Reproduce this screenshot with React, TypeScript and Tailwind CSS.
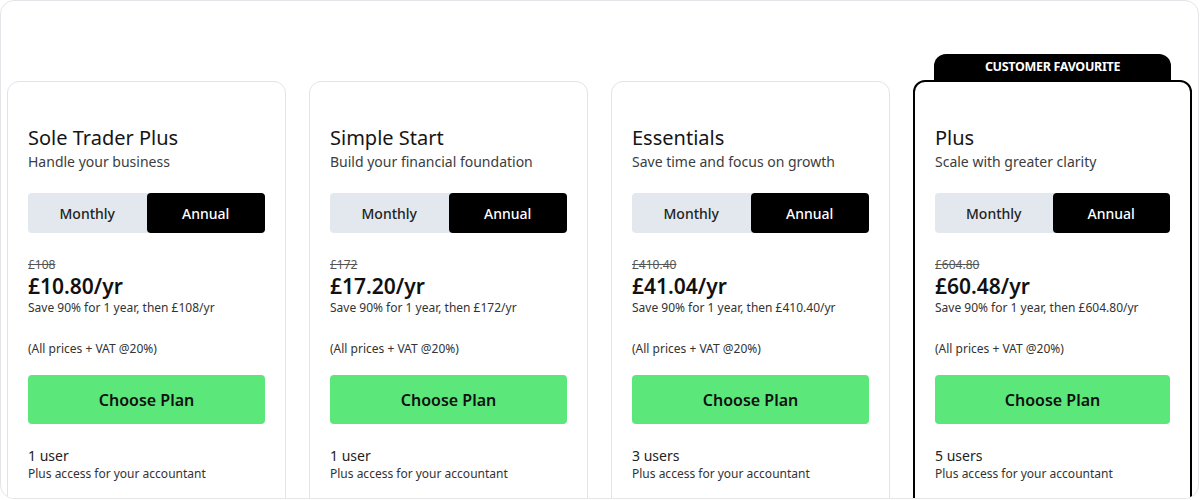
const plans = [
  {
    name: "Sole Trader Plus",
    tagline: "Handle your business",
    was: "£108",
    price: "£10.80/yr",
    note: "Save 90% for 1 year, then £108/yr",
    users: "1 user",
    featured: false,
  },
  {
    name: "Simple Start",
    tagline: "Build your financial foundation",
    was: "£172",
    price: "£17.20/yr",
    note: "Save 90% for 1 year, then £172/yr",
    users: "1 user",
    featured: false,
  },
  {
    name: "Essentials",
    tagline: "Save time and focus on growth",
    was: "£410.40",
    price: "£41.04/yr",
    note: "Save 90% for 1 year, then £410.40/yr",
    users: "3 users",
    featured: false,
  },
  {
    name: "Plus",
    tagline: "Scale with greater clarity",
    was: "£604.80",
    price: "£60.48/yr",
    note: "Save 90% for 1 year, then £604.80/yr",
    users: "5 users",
    featured: true,
  },
];

type Plan = (typeof plans)[number];

function PlanCard({ plan }: { plan: Plan }) {
  return (
    <div className="flex flex-col">
      {plan.featured ? (
        <div className="mx-[21px] h-[26px] rounded-t-[12px] bg-black text-white text-[12.5px] font-bold leading-[26px] text-center tracking-tight">
          CUSTOMER FAVOURITE
        </div>
      ) : (
        <div className="h-[27px]" />
      )}
      <div
        className={
          plan.featured
            ? "rounded-[12px] border-2 border-black px-[20px] pt-[43px] pb-[40px] bg-white"
            : "rounded-[12px] border border-[#dfe4e8] px-[20px] pt-[43px] pb-[40px] bg-white"
        }
      >
        <h3 className="text-[20px] leading-[26px] text-[#151515]">{plan.name}</h3>
        <p className="mt-[1px] text-[14px] leading-[20px] text-[#3b3d40]">{plan.tagline}</p>

        <div className="mt-[21px] flex h-[40px] rounded-[4px] bg-[#e3e8ee] text-[14px] font-medium">
          <button className="flex-1 text-[#222]">Monthly</button>
          <button className="flex-1 rounded-[4px] bg-black text-white">Annual</button>
        </div>

        <div className="mt-[24px] text-[12px] leading-[16px] text-[#555] line-through">{plan.was}</div>
        <div className="text-[21px] leading-[27px] font-semibold text-[#111]">{plan.price}</div>
        <div className="text-[12px] leading-[16px] text-[#333]">{plan.note}</div>

        <div className="mt-[25px] text-[12px] leading-[16px] text-[#333]">(All prices + VAT @20%)</div>

        <button className="mt-[18px] h-[49px] w-full rounded-[4px] bg-[#5be77a] text-[16px] font-semibold text-[#111]">
          Choose Plan
        </button>

        <div className="mt-[22px] text-[14px] leading-[20px] text-[#222]">{plan.users}</div>
        <div className="text-[12px] leading-[16px] text-[#333]">Plus access for your accountant</div>
      </div>
    </div>
  );
}

export default function App() {
  return (
    <div className="w-[1200px] h-[500px] bg-white" style={{ fontFamily: "'Noto Sans', sans-serif" }}>
      <div className="h-[499px] w-[1199px] overflow-hidden rounded-[14px] border border-[#e3e5e8] px-[6px] pt-[53px]">
        <div className="grid grid-cols-4 gap-[23px]">
          {plans.map((p) => (
            <PlanCard key={p.name} plan={p} />
          ))}
        </div>
      </div>
    </div>
  );
}
